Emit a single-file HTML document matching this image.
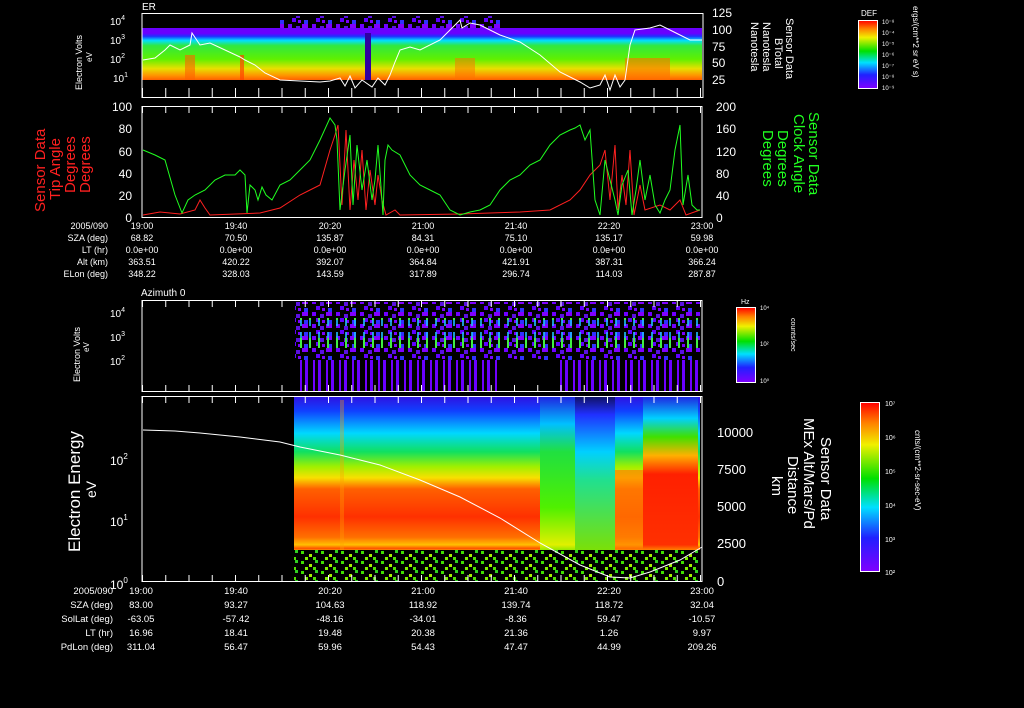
<!DOCTYPE html>
<html><head><meta charset="utf-8"><style>
html,body{margin:0;padding:0;background:#000;width:1024px;height:708px;overflow:hidden}
svg{display:block}
text{font-family:"Liberation Sans",sans-serif;fill:#fff}
</style></head><body>
<svg width="1024" height="708" viewBox="0 0 1024 708">
<defs>
<linearGradient id="g1" x1="0" y1="0" x2="0" y2="1">
<stop offset="0" stop-color="#6a00ff"/><stop offset="0.1" stop-color="#6a00ff"/>
<stop offset="0.16" stop-color="#2030ff"/><stop offset="0.24" stop-color="#00e0ff"/>
<stop offset="0.34" stop-color="#30e840"/><stop offset="0.6" stop-color="#60f000"/>
<stop offset="0.78" stop-color="#e8e000"/><stop offset="0.92" stop-color="#ff9000"/>
<stop offset="1" stop-color="#ff6000"/></linearGradient>
<linearGradient id="g4" x1="0" y1="0" x2="0" y2="1">
<stop offset="0" stop-color="#3010e0"/><stop offset="0.08" stop-color="#1040ff"/>
<stop offset="0.2" stop-color="#00d8ff"/><stop offset="0.3" stop-color="#10e060"/>
<stop offset="0.38" stop-color="#a0f000"/><stop offset="0.44" stop-color="#f8e000"/>
<stop offset="0.5" stop-color="#ff6000"/><stop offset="0.65" stop-color="#ff3000"/>
<stop offset="0.76" stop-color="#ff7000"/><stop offset="0.8" stop-color="#ffc000"/>
<stop offset="0.82" stop-color="#ff5000"/><stop offset="0.84" stop-color="#f0f000"/>
<stop offset="0.86" stop-color="#30e000"/><stop offset="0.88" stop-color="#000"/>
<stop offset="1" stop-color="#000"/></linearGradient>
<linearGradient id="g4b" x1="0" y1="0" x2="0" y2="1">
<stop offset="0" stop-color="#2020e0"/><stop offset="0.15" stop-color="#00c0ff"/>
<stop offset="0.3" stop-color="#20e040"/><stop offset="0.6" stop-color="#50f000"/>
<stop offset="0.8" stop-color="#e0f000"/><stop offset="0.86" stop-color="#40e000"/>
<stop offset="0.88" stop-color="#000"/><stop offset="1" stop-color="#000"/></linearGradient>
<linearGradient id="g4d" x1="0" y1="0" x2="0" y2="1">
<stop offset="0" stop-color="#101060"/><stop offset="0.1" stop-color="#2030ff"/>
<stop offset="0.3" stop-color="#00d0ff"/><stop offset="0.45" stop-color="#20e090"/>
<stop offset="0.85" stop-color="#80e000"/><stop offset="0.88" stop-color="#000"/><stop offset="1" stop-color="#000"/></linearGradient>
<linearGradient id="g4c" x1="0" y1="0" x2="0" y2="1">
<stop offset="0" stop-color="#2020e0"/><stop offset="0.12" stop-color="#00d0ff"/>
<stop offset="0.22" stop-color="#40e000"/><stop offset="0.32" stop-color="#ffb000"/>
<stop offset="0.42" stop-color="#ff2000"/><stop offset="0.8" stop-color="#ff3000"/>
<stop offset="0.85" stop-color="#ffc000"/><stop offset="0.88" stop-color="#000"/><stop offset="1" stop-color="#000"/></linearGradient>
<linearGradient id="cb" x1="0" y1="1" x2="0" y2="0">
<stop offset="0" stop-color="#8000ff"/><stop offset="0.2" stop-color="#2020ff"/>
<stop offset="0.38" stop-color="#00e0ff"/><stop offset="0.55" stop-color="#00e000"/>
<stop offset="0.75" stop-color="#f0f000"/><stop offset="0.88" stop-color="#ff8000"/>
<stop offset="1" stop-color="#ff0000"/></linearGradient>
<pattern id="noise" width="24" height="12" patternUnits="userSpaceOnUse">
<rect width="24" height="12" fill="#000"/>
<rect x="0" y="0" width="4" height="4" fill="#7000ff"/><rect x="8" y="2" width="4" height="4" fill="#5a10e0"/>
<rect x="14" y="0" width="6" height="4" fill="#8000ff"/><rect x="4" y="6" width="4" height="4" fill="#6000ff"/>
<rect x="16" y="8" width="4" height="4" fill="#3030ff"/><rect x="10" y="8" width="3" height="3" fill="#7a00ff"/>
</pattern>
<pattern id="gnoise" width="20" height="10" patternUnits="userSpaceOnUse">
<rect width="20" height="10" fill="#000"/>
<rect x="1" y="1" width="3" height="3" fill="#40e000"/><rect x="9" y="4" width="3" height="3" fill="#a0f000"/>
<rect x="15" y="0" width="3" height="3" fill="#30d020"/><rect x="5" y="7" width="3" height="3" fill="#80f000"/>
<rect x="13" y="7" width="3" height="3" fill="#50e000"/>
</pattern>
<pattern id="stripes" width="9" height="30" patternUnits="userSpaceOnUse">
<rect x="3" y="2" width="2" height="24" fill="#20c0ff" opacity=".8"/><rect x="3" y="8" width="2" height="12" fill="#40f040"/>
</pattern>
<pattern id="bars" width="13" height="40" patternUnits="userSpaceOnUse">
<rect x="1" width="2" height="40" fill="#7000ff"/><rect x="6" width="3" height="40" fill="#6a00ff"/>
</pattern>
<pattern id="tk" width="23.25" height="10" patternUnits="userSpaceOnUse" x="142"><rect width="1" height="10" fill="#fff"/></pattern>
</defs>

<!-- Panel 1 -->
<text x="142" y="10" font-size="10">ER</text>
<rect x="280" y="16" width="220" height="12" fill="url(#noise)"/>
<rect x="142" y="28" width="560" height="52" fill="url(#g1)"/>
<rect x="185" y="55" width="10" height="25" fill="#ff6000" opacity=".6"/>
<rect x="240" y="55" width="4" height="25" fill="#ff4000" opacity=".7"/>
<rect x="365" y="33" width="6" height="47" fill="#3000a0"/>
<rect x="455" y="58" width="20" height="22" fill="#ff7000" opacity=".5"/>
<rect x="625" y="58" width="45" height="22" fill="#ff7000" opacity=".6"/>
<polyline fill="none" stroke="#fff" stroke-width="1" points="143,60 155,58 165,50 170,45 180,50 190,45 192,33 200,45 210,43 225,50 240,57 245,60 255,65 265,73 280,80 300,81 320,82 330,81 340,78 345,86 350,76 355,88 362,80 372,87 378,78 385,85 390,75 395,62 400,50 410,47 420,50 440,40 450,30 460,20 462,28 470,23 480,25 500,35 520,42 540,55 560,72 580,82 590,88 600,85 605,75 610,90 615,75 620,87 625,80 630,45 635,30 650,28 660,25 670,30 680,35 690,40 702,40"/>
<rect x="142" y="13.5" width="561" height="84" fill="none" stroke="#fff"/>
<rect x="142" y="88" width="560" height="10" fill="url(#tk)"/>
<g font-size="10"><text x="110" y="25">10<tspan font-size="7" dy="-5">4</tspan></text><text x="110" y="44">10<tspan font-size="7" dy="-5">3</tspan></text><text x="110" y="63">10<tspan font-size="7" dy="-5">2</tspan></text><text x="113" y="82">10<tspan font-size="7" dy="-5">1</tspan></text></g>
<text transform="translate(82,90) rotate(-90)" font-size="9">Electron Volts</text>
<text transform="translate(92,62) rotate(-90)" font-size="8">eV</text>
<g font-size="12"><text x="712" y="17">125</text><text x="712" y="34">100</text><text x="712" y="51">75</text><text x="712" y="67">50</text><text x="712" y="84">25</text></g>
<g font-size="11">
<text transform="translate(786,18) rotate(90)">Sensor Data</text>
<text transform="translate(775,38) rotate(90)">BTotal</text>
<text transform="translate(763,22) rotate(90)">Nanotesla</text>
<text transform="translate(751,22) rotate(90)">Nanotesla</text></g>
<text x="861" y="16" font-size="8">DEF</text>
<rect x="858.5" y="20.5" width="19" height="68" fill="url(#cb)" stroke="#fff"/>
<g font-size="6"><text x="882" y="24">10⁻⁸</text><text x="882" y="35">10⁻⁴</text><text x="882" y="46">10⁻⁵</text><text x="882" y="57">10⁻⁶</text><text x="882" y="68">10⁻⁷</text><text x="882" y="79">10⁻⁸</text><text x="882" y="90">10⁻⁹</text></g>
<text transform="translate(913,6) rotate(90)" font-size="8">ergs/(cm**2 sr eV s)</text>

<!-- Panel 2 -->
<rect x="142" y="106.5" width="560" height="111" fill="none" stroke="#fff"/>
<rect x="142" y="107" width="560" height="6" fill="url(#tk)"/>
<g font-size="12" text-anchor="end"><text x="132" y="111">100</text><text x="132" y="133">80</text><text x="132" y="156">60</text><text x="132" y="178">40</text><text x="132" y="200">20</text><text x="132" y="222">0</text></g>
<g font-size="12"><text x="716" y="111">200</text><text x="716" y="133">160</text><text x="716" y="156">120</text><text x="716" y="178">80</text><text x="716" y="200">40</text><text x="716" y="222">0</text></g>
<polyline fill="none" stroke="#ff2020" stroke-width="1" points="143,215 160,212 180,214 195,210 200,200 205,208 210,215 260,213 280,208 300,195 310,190 320,185 330,150 335,135 338,125 342,205 346,130 350,210 354,160 358,200 362,150 366,210 370,170 375,205 378,175 382,200 386,215 395,210 400,215 460,214 520,212 550,210 570,200 580,190 590,175 600,165 605,150 610,200 615,145 618,210 622,175 626,205 630,150 634,215 640,185 645,210 660,205 670,210 680,200 686,215 700,210"/>
<polyline fill="none" stroke="#20ff20" stroke-width="1" points="143,150 155,155 165,160 175,195 182,213 188,200 195,195 205,190 215,180 225,175 235,175 240,170 245,175 247,213 250,185 255,190 258,200 262,187 266,195 272,200 280,185 290,180 300,170 310,160 320,140 330,118 335,125 337,140 340,210 345,170 350,135 353,205 357,145 362,190 367,160 372,200 375,180 378,145 383,215 385,160 388,145 392,150 400,155 410,175 420,185 430,190 440,195 450,210 460,215 470,212 480,210 490,205 500,190 510,180 520,175 530,165 540,160 550,145 560,135 570,130 575,128 580,125 585,140 590,130 595,200 600,215 605,160 610,180 615,200 618,215 622,185 628,170 632,215 636,190 640,160 645,200 650,175 655,205 660,213 665,200 670,190 675,150 680,125 683,205 688,175 692,205 697,210 700,210"/>
<g font-size="15">
<text transform="translate(45,212) rotate(-90)" style="fill:#ff2020">Sensor Data</text>
<text transform="translate(60,200) rotate(-90)" style="fill:#ff2020">Tip Angle</text>
<text transform="translate(75,193) rotate(-90)" style="fill:#ff2020">Degrees</text>
<text transform="translate(90,193) rotate(-90)" style="fill:#ff2020">Degrees</text></g>
<g font-size="15">
<text transform="translate(809,112) rotate(90)" style="fill:#20ff20">Sensor Data</text>
<text transform="translate(794,114) rotate(90)" style="fill:#20ff20">Clock Angle</text>
<text transform="translate(778,130) rotate(90)" style="fill:#20ff20">Degrees</text>
<text transform="translate(763,130) rotate(90)" style="fill:#20ff20">Degrees</text></g>
<g font-size="9" text-anchor="end"><text x="108" y="229">2005/090</text><text x="108" y="241">SZA (deg)</text><text x="108" y="253">LT (hr)</text><text x="108" y="265">Alt (km)</text><text x="108" y="277">ELon (deg)</text></g>
<g font-size="9" text-anchor="middle">
<g transform="translate(142,0)"><text y="229">19:00</text><text y="241">68.82</text><text y="253">0.0e+00</text><text y="265">363.51</text><text y="277">348.22</text></g>
<g transform="translate(236,0)"><text y="229">19:40</text><text y="241">70.50</text><text y="253">0.0e+00</text><text y="265">420.22</text><text y="277">328.03</text></g>
<g transform="translate(330,0)"><text y="229">20:20</text><text y="241">135.87</text><text y="253">0.0e+00</text><text y="265">392.07</text><text y="277">143.59</text></g>
<g transform="translate(423,0)"><text y="229">21:00</text><text y="241">84.31</text><text y="253">0.0e+00</text><text y="265">364.84</text><text y="277">317.89</text></g>
<g transform="translate(516,0)"><text y="229">21:40</text><text y="241">75.10</text><text y="253">0.0e+00</text><text y="265">421.91</text><text y="277">296.74</text></g>
<g transform="translate(609,0)"><text y="229">22:20</text><text y="241">135.17</text><text y="253">0.0e+00</text><text y="265">387.31</text><text y="277">114.03</text></g>
<g transform="translate(702,0)"><text y="229">23:00</text><text y="241">59.98</text><text y="253">0.0e+00</text><text y="265">366.24</text><text y="277">287.87</text></g></g>

<!-- Panel 3 -->
<text x="141" y="296" font-size="10">Azimuth 0</text>
<rect x="295" y="302" width="405" height="58" fill="url(#noise)"/>
<rect x="295" y="318" width="405" height="30" fill="url(#stripes)"/>
<rect x="295" y="360" width="405" height="31" fill="url(#bars)"/>
<rect x="500" y="360" width="60" height="31" fill="#000"/>
<rect x="142" y="300.5" width="560" height="91" fill="none" stroke="#fff"/>
<rect x="142" y="301" width="560" height="6" fill="url(#tk)"/>
<rect x="142" y="385" width="560" height="6" fill="url(#tk)"/>
<g font-size="10"><text x="110" y="317">10<tspan font-size="7" dy="-5">4</tspan></text><text x="110" y="341">10<tspan font-size="7" dy="-5">3</tspan></text><text x="110" y="365">10<tspan font-size="7" dy="-5">2</tspan></text></g>
<text transform="translate(80,382) rotate(-90)" font-size="9">Electron Volts</text>
<text transform="translate(89,352) rotate(-90)" font-size="8">eV</text>
<text x="741" y="304" font-size="7">Hz</text>
<rect x="736.5" y="307.5" width="19" height="75" fill="url(#cb)" stroke="#fff"/>
<g font-size="6"><text x="760" y="310">10⁴</text><text x="760" y="346">10²</text><text x="760" y="383">10⁰</text></g>
<text transform="translate(791,318) rotate(90)" font-size="7">counts/sec</text>

<!-- Panel 4 -->
<rect x="294" y="396" width="406" height="186" fill="url(#g4)"/>
<rect x="540" y="396" width="35" height="186" fill="url(#g4b)"/>
<rect x="575" y="396" width="40" height="186" fill="url(#g4d)"/>
<rect x="615" y="470" width="28" height="85" fill="#ff8000" opacity=".7"/>
<rect x="643" y="396" width="55" height="186" fill="url(#g4c)"/>
<rect x="294" y="550" width="406" height="32" fill="url(#gnoise)"/>
<rect x="340" y="400" width="4" height="150" fill="#ffa000" opacity=".35"/>
<polyline fill="none" stroke="#fff" stroke-width="1" points="143,430 175,431 200,433 240,437 280,442 300,447 340,455 380,465 420,480 460,497 500,518 540,543 580,565 610,577 630,578 650,572 680,560 702,547"/>
<rect x="142" y="396.5" width="560" height="185" fill="none" stroke="#fff"/>
<rect x="142" y="397" width="560" height="6" fill="url(#tk)"/>
<rect x="142" y="575" width="560" height="6" fill="url(#tk)"/>
<g font-size="12"><text x="110" y="465">10<tspan font-size="8" dy="-6">2</tspan></text><text x="110" y="526">10<tspan font-size="8" dy="-6">1</tspan></text><text x="110" y="589">10<tspan font-size="8" dy="-6">0</tspan></text></g>
<text transform="translate(80,552) rotate(-90)" font-size="17">Electron Energy</text>
<text transform="translate(96,498) rotate(-90)" font-size="14">eV</text>
<g font-size="13"><text x="717" y="437">10000</text><text x="717" y="474">7500</text><text x="717" y="511">5000</text><text x="717" y="548">2500</text><text x="717" y="586">0</text></g>
<g font-size="15">
<text transform="translate(821,437) rotate(90)">Sensor Data</text>
<text transform="translate(804,418) rotate(90)">MEx Alt/Mars/Pd</text>
<text transform="translate(788,456) rotate(90)">Distance</text>
<text transform="translate(772,476) rotate(90)">km</text></g>
<rect x="860.5" y="402.5" width="19" height="169" fill="url(#cb)" stroke="#fff"/>
<g font-size="7"><text x="885" y="406">10⁷</text><text x="885" y="440">10⁶</text><text x="885" y="474">10⁵</text><text x="885" y="508">10⁴</text><text x="885" y="542">10³</text><text x="885" y="575">10²</text></g>
<text transform="translate(915,430) rotate(90)" font-size="8">cnts/(cm**2-sr-sec-eV)</text>
<g font-size="9.5" text-anchor="end"><text x="113" y="594">2005/090</text><text x="113" y="608">SZA (deg)</text><text x="113" y="622">SolLat (deg)</text><text x="113" y="636">LT (hr)</text><text x="113" y="650">PdLon (deg)</text></g>
<g font-size="9.5" text-anchor="middle">
<g transform="translate(141,0)"><text y="594">19:00</text><text y="608">83.00</text><text y="622">-63.05</text><text y="636">16.96</text><text y="650">311.04</text></g>
<g transform="translate(236,0)"><text y="594">19:40</text><text y="608">93.27</text><text y="622">-57.42</text><text y="636">18.41</text><text y="650">56.47</text></g>
<g transform="translate(330,0)"><text y="594">20:20</text><text y="608">104.63</text><text y="622">-48.16</text><text y="636">19.48</text><text y="650">59.96</text></g>
<g transform="translate(423,0)"><text y="594">21:00</text><text y="608">118.92</text><text y="622">-34.01</text><text y="636">20.38</text><text y="650">54.43</text></g>
<g transform="translate(516,0)"><text y="594">21:40</text><text y="608">139.74</text><text y="622">-8.36</text><text y="636">21.36</text><text y="650">47.47</text></g>
<g transform="translate(609,0)"><text y="594">22:20</text><text y="608">118.72</text><text y="622">59.47</text><text y="636">1.26</text><text y="650">44.99</text></g>
<g transform="translate(702,0)"><text y="594">23:00</text><text y="608">32.04</text><text y="622">-10.57</text><text y="636">9.97</text><text y="650">209.26</text></g></g>
</svg>
</body></html>
